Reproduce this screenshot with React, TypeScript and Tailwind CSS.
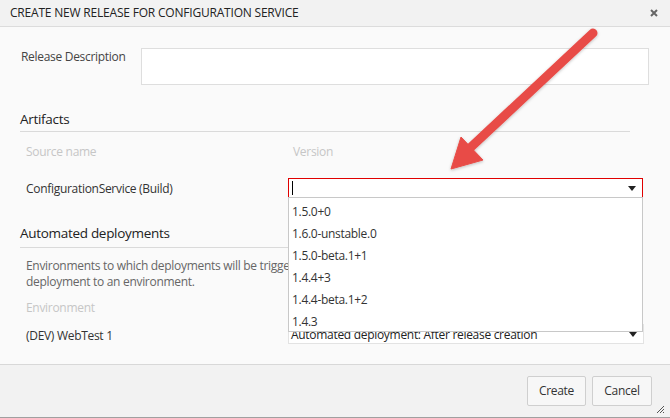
import React from "react";

const font = { fontFamily: '"Open Sans", "Noto Sans", sans-serif' };

function Caret() {
  return (
    <svg width="8" height="5" viewBox="0 0 8 5" className="shrink-0">
      <path d="M0 0 H8 L4 5 Z" fill="#222" />
    </svg>
  );
}

export default function App() {
  const versions = ["1.5.0+0", "1.6.0-unstable.0", "1.5.0-beta.1+1", "1.4.4+3", "1.4.4-beta.1+2", "1.4.3"];
  return (
    <div
      className="relative w-[670px] h-[418px] overflow-hidden bg-[#fafafa] flex flex-col text-[12px] text-[#333] tracking-[-0.3px]"
      style={font}
    >
      {/* Header */}
      <div className="h-[27px] shrink-0 bg-[#f2f2f2] border-b border-[#dcdcdc] flex items-center justify-between pl-[10px] pr-[12px]">
        <span className="text-[12px] text-[#222] tracking-[-0.2px]">CREATE NEW RELEASE FOR CONFIGURATION SERVICE</span>
        <svg width="8" height="8" viewBox="0 0 8 8">
          <path d="M1 1 L7 7 M7 1 L1 7" stroke="#666" strokeWidth="2" />
        </svg>
      </div>

      {/* Body */}
      <div className="flex-1 flex flex-col pl-[20px]">
        <div className="flex mt-[21px]">
          <div className="w-[121px] shrink-0 pl-[1px] leading-[16px] pt-[1px] text-[#444]">Release Description</div>
          <div className="w-[508px] shrink-0 h-[37px] bg-white border border-[#dedede]" />
        </div>

        <div className="mt-[24px] w-[610px] border-b border-[#dadada] pb-[2px] text-[13.5px] leading-[20px] text-[#222]">
          Artifacts
        </div>

        <div className="flex mt-[12px] leading-[16px] text-[#c6c6c6]">
          <div className="w-[268px] shrink-0 pl-[6px]">Source name</div>
          <div className="pl-[5px]">Version</div>
        </div>

        <div className="flex items-center mt-[18px]">
          <div className="w-[268px] shrink-0 pl-[6px] leading-[16px] pt-[1px]">ConfigurationService (Build)</div>
          <div className="w-[355px] shrink-0 h-[20px] bg-white border border-[#e00000] flex items-center justify-between pl-[3px] pr-[6px]">
            <div className="w-[1px] h-[14px] bg-black" />
            <Caret />
          </div>
        </div>

        <div className="mt-[25px] w-[610px] border-b border-[#dadada] pb-[4px] text-[13.5px] leading-[20px] text-[#222]">
          Automated deployments
        </div>

        <div className="mt-[10px] pl-[6px] leading-[16px] text-[#666] whitespace-nowrap">
          Environments to which deployments will be triggered automatically after a release is created. Manually trigger
          <br />
          deployment to an environment.
        </div>

        <div className="mt-[10px] pl-[6px] leading-[16px] text-[#c6c6c6]">Environment</div>

        <div className="flex mt-[8px]">
          <div className="w-[268px] shrink-0 pl-[6px] leading-[16px] pt-[4px]">(DEV) WebTest 1</div>
          <div className="w-[356px] shrink-0 h-[20px] bg-white border border-[#e3e3e3] flex items-center justify-between pl-[2px] pr-[6px]">
            <span className="leading-[16px] text-[#222] pt-[2px]">Automated deployment: After release creation</span>
            <Caret />
          </div>
        </div>
      </div>

      {/* Footer */}
      <div className="relative h-[54px] shrink-0 bg-[#f2f2f2] border-t border-[#d8d8d8] border-b border-b-[#a0a0a0] flex items-center justify-end gap-[6px] pr-[18px]">
        <button className="w-[59px] h-[30px] border border-[#cfcfcf] bg-[#f7f7f7] rounded-[2px] text-[12px] text-[#333]">Create</button>
        <button className="w-[60px] h-[30px] border border-[#cfcfcf] bg-[#f7f7f7] rounded-[2px] text-[12px] text-[#333]">Cancel</button>
        <svg className="absolute right-[5px] bottom-[3px]" width="10" height="10" viewBox="0 0 10 10">
          <path d="M9 2 L2 9 M9 5 L5 9 M9 8 L8 9" stroke="#555" strokeWidth="1" />
        </svg>
      </div>

      {/* Dropdown list (overlay) */}
      <div className="absolute left-[288px] top-[197px] w-[355px] h-[135px] bg-white border border-[#c8c8c8] pt-[3px]">
        {versions.map((v) => (
          <div key={v} className="h-[22px] leading-[22px] pl-[3px] text-[#333]">{v}</div>
        ))}
      </div>

      {/* Annotation arrow */}
      <svg className="absolute left-0 top-0 pointer-events-none" width="670" height="418" viewBox="0 0 670 418">
        <defs>
          <filter id="sh" x="-20%" y="-20%" width="140%" height="140%">
            <feDropShadow dx="0" dy="1" stdDeviation="1.5" floodColor="#000" floodOpacity="0.25" />
          </filter>
        </defs>
        <g filter="url(#sh)" fill="#e84c47" stroke="#e84c47">
          <line x1="593" y1="33" x2="470" y2="148" strokeWidth="9" strokeLinecap="round" />
          <path d="M451 169 L461 137 L483 160 Z" strokeWidth="1" strokeLinejoin="round" />
        </g>
      </svg>
    </div>
  );
}
